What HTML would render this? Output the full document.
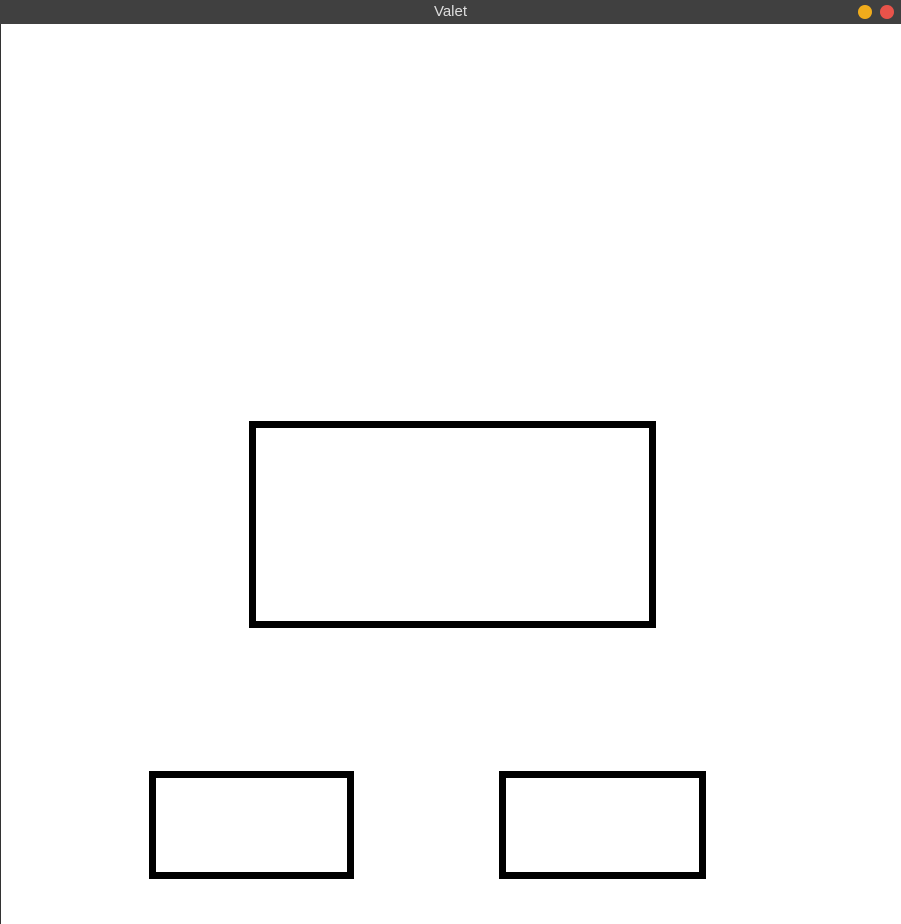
<!DOCTYPE html>
<html><head><style>
body{margin:0;width:901px;height:924px;background:#fff;position:relative;overflow:hidden;font-family:"Liberation Sans",sans-serif}
.bar{position:absolute;left:0;top:0;width:901px;height:24px;background:#404040;color:#ddd;font-size:15px;text-align:center;line-height:24px}
.lb{position:absolute;left:0;top:24px;width:1px;height:900px;background:#333}
.d{position:absolute;top:5px;width:14px;height:14px;border-radius:50%}
.r{position:absolute;border:7px solid #000;box-sizing:border-box}
</style></head><body>
<div class="bar">Valet</div>
<div class="d" style="left:858px;background:#f0ac1c"></div>
<div class="d" style="left:880px;background:#e8534a"></div>
<div class="lb"></div>
<div class="r" style="left:249px;top:421px;width:407px;height:207px"></div>
<div class="r" style="left:149px;top:771px;width:205px;height:108px"></div>
<div class="r" style="left:499px;top:771px;width:207px;height:108px"></div>
</body></html>
